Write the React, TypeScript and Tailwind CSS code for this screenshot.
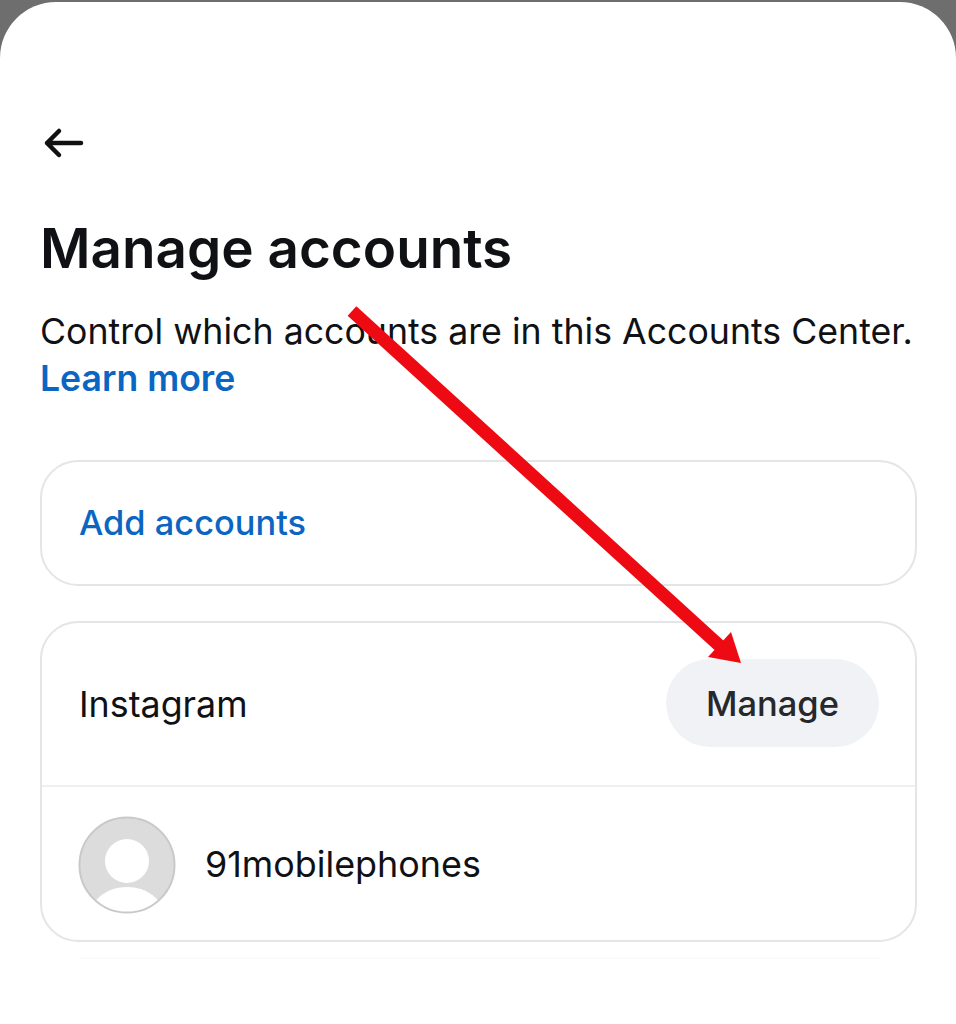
import React from "react";

export default function App() {
  return (
    <div className="relative h-[1024px] w-[956px] overflow-hidden bg-[#6e6e6e] pt-[2px] font-['Inter',sans-serif] text-[#101114]">
      <div className="h-[1022px] rounded-t-[56px] bg-white px-[40px] pt-[125px]">
        {/* back */}
        <svg width="42" height="32" viewBox="0 0 42 32" fill="none" className="ml-[3px] block">
          <path
            d="M38 16H4M16 4 4 16l12 12"
            stroke="#111"
            strokeWidth="4.5"
            strokeLinecap="round"
            strokeLinejoin="round"
          />
        </svg>

        <h1 className="mt-[57px] text-[54.8px] leading-[64px] font-semibold">Manage accounts</h1>

        <p className="mt-[27px] text-[35.7px] leading-[48px] whitespace-nowrap">
          Control which accounts are in this Accounts Center.
        </p>
        <a className="block text-[35.6px] leading-[48px] font-semibold text-[#0a66c2]">Learn more</a>

        <div className="mt-[57px] flex h-[126px] w-[877px] items-center rounded-[38px] border-2 border-[#e3e5e8] pl-[37px] text-[34.4px] font-medium text-[#0a66c2]">
          Add accounts
        </div>

        <div className="mt-[35px] w-[877px] rounded-[38px] border-2 border-[#e3e5e8]">
          <div className="flex h-[164px] items-center justify-between border-b-2 border-[#eeeff1] pr-[36px] pb-[2px] pl-[37px]">
            <span className="mt-[4px] text-[35.8px]">Instagram</span>
            <button className="h-[88px] w-[213px] rounded-full bg-[#f1f2f5] pt-[2px] text-[34.5px] font-medium text-[#26282c]">
              Manage
            </button>
          </div>
          <div className="flex h-[153px] items-center gap-[29px] pt-[3px] pl-[36px]">
            <svg width="98" height="98" viewBox="0 0 98 98" className="block">
              <defs>
                <clipPath id="avatar">
                  <circle cx="49" cy="49" r="48" />
                </clipPath>
              </defs>
              <circle cx="49" cy="49" r="48" fill="#dcdcdc" />
              <circle cx="49" cy="45" r="22" fill="#fff" />
              <ellipse cx="49" cy="98" rx="36" ry="27" fill="#fff" clipPath="url(#avatar)" />
              <circle cx="49" cy="49" r="47.5" fill="none" stroke="#c9c9c9" strokeWidth="2" />
            </svg>
            <span className="text-[35.9px]">91mobilephones</span>
          </div>
        </div>

        {/* faint line under the card */}
        <div className="mt-[15px] ml-[40px] h-[2px] w-[800px] bg-[#fbfbfb]" />
      </div>

      {/* red annotation arrow */}
      <svg width="956" height="1024" viewBox="0 0 956 1024" className="pointer-events-none absolute inset-0">
        <path d="M352 311 722 648" stroke="#ee0a12" strokeWidth="13" fill="none" />
        <path d="M741 663 731 632 708 657Z" fill="#ee0a12" />
      </svg>
    </div>
  );
}
